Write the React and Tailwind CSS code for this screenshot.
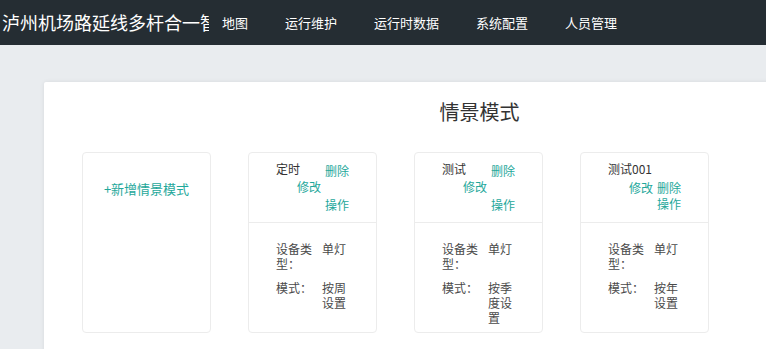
import React from 'react';

const navItems = ['地图', '运行维护', '运行时数据', '系统配置', '人员管理'];

const scenes = [
  { title: '定时', type: '单灯', mode: '按周设置', split: true },
  { title: '测试', type: '单灯', mode: '按季度设置', split: true },
  { title: '测试001', type: '单灯', mode: '按年设置', split: false },
];

function SceneCard({ scene }) {
  return (
    <div className="w-[129px] h-[181px] shrink-0 bg-white border border-[#ececec] rounded-[4px] flex flex-col">
      {/* card head: title + actions */}
      <div className="h-[70px] border-b border-[#ececec] px-[27px] pt-[7px] text-[12px]">
        {scene.split ? (
          <>
            <div className="flex justify-between leading-[17px]">
              <span className="text-[#333]">{scene.title}</span>
              <span className="text-[#1fa89b] pt-[2px]">删除</span>
            </div>
            <div className="flex justify-end pr-[28px] leading-[16px]">
              <span className="text-[#1fa89b]">修改</span>
            </div>
            <div className="flex justify-end leading-[16px] mt-[2px]">
              <span className="text-[#1fa89b]">操作</span>
            </div>
          </>
        ) : (
          <>
            <div className="leading-[17px] text-[#333]">{scene.title}</div>
            <div className="flex justify-end gap-[4px] leading-[16px] mt-[3px]">
              <span className="text-[#1fa89b]">修改</span>
              <span className="text-[#1fa89b]">删除</span>
            </div>
            <div className="flex justify-end leading-[16px]">
              <span className="text-[#1fa89b]">操作</span>
            </div>
          </>
        )}
      </div>
      {/* card body */}
      <div className="px-[27px] pt-[18px] text-[12px] leading-[15px] text-[#4a4a4a] flex flex-col gap-[9px]">
        <div className="flex">
          <span className="w-[46px]">设备类型：</span>
          <span className="w-[27px]">{scene.type}</span>
        </div>
        <div className="flex">
          <span className="w-[46px]">模式：</span>
          <span className="w-[27px]">{scene.mode}</span>
        </div>
      </div>
    </div>
  );
}

export default function App() {
  return (
    <div
      className="w-[766px] h-[349px] overflow-hidden bg-[#e9ecef] flex flex-col"
      style={{ fontFamily: '"Microsoft YaHei", "Noto Sans CJK SC", "Noto Sans", sans-serif' }}
    >
      {/* top bar */}
      <div className="h-[45px] shrink-0 bg-[#252d33] flex items-center text-white">
        <div className="w-[209px] pl-[2px] overflow-hidden whitespace-nowrap text-[18px] leading-[45px]">
          泸州机场路延线多杆合一智
        </div>
        <nav className="ml-[13px] flex items-center gap-[37px] text-[13px]">
          {navItems.map((n) => (
            <span key={n} className="whitespace-nowrap">{n}</span>
          ))}
        </nav>
      </div>

      {/* main panel */}
      <div className="pt-[37px] pl-[44px]">
        <div className="w-[871px] h-[400px] bg-white rounded-[2px] shadow-[0_0_4px_rgba(0,0,0,0.08)]">
          <div className="pt-[16px] text-center text-[20px] leading-[28px] text-[#333]">情景模式</div>
          <div className="mt-[26px] pl-[38px] flex gap-[37px]">
            <div className="w-[129px] h-[181px] shrink-0 bg-white border border-[#ececec] rounded-[4px] pt-[27px] text-center text-[13px] leading-[17px] text-[#1fa89b]">
              +新增情景模式
            </div>
            {scenes.map((s) => (
              <SceneCard key={s.title} scene={s} />
            ))}
          </div>
        </div>
      </div>
    </div>
  );
}
